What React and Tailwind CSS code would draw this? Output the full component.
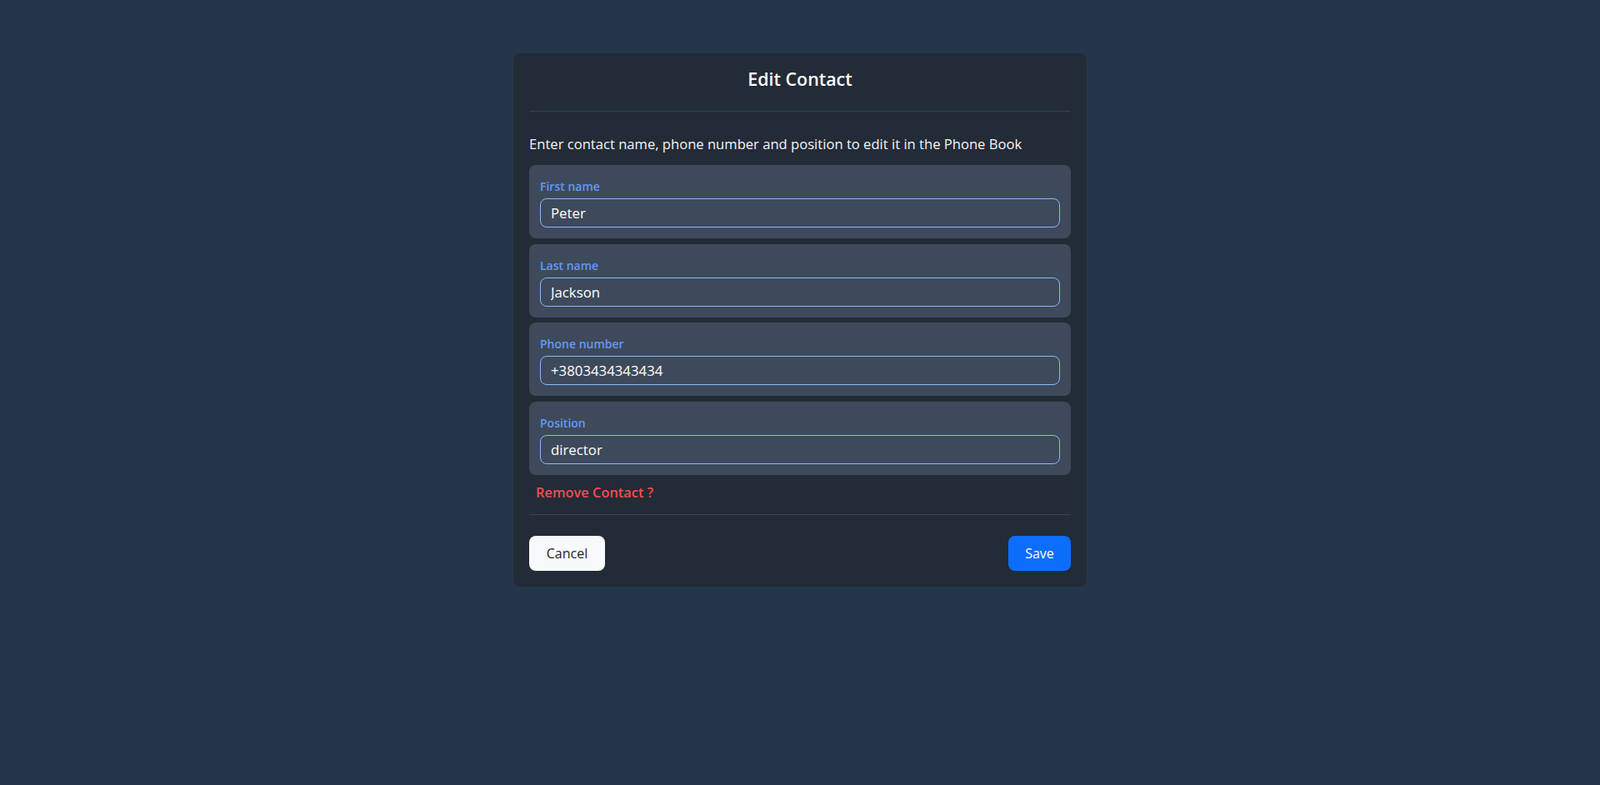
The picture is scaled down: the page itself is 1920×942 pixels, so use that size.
import React from "react";

const fields = [
  { label: "First name", value: "Peter" },
  { label: "Last name", value: "Jackson" },
  { label: "Phone number", value: "+3803434343434" },
  { label: "Position", value: "director" },
];

export default function App() {
  return (
    <div
      className="min-h-screen bg-[#253549] flex justify-center pt-[64px]"
      style={{ fontFamily: '"Open Sans", "Noto Sans", sans-serif' }}
    >
      <div className="w-[688px] self-start rounded-lg bg-[#232b36] px-[19px]">
        <div className="pt-[16px] pb-[23px] border-b border-[#30425c] text-center text-[21.4px] leading-[30px] font-semibold text-white">
          Edit Contact
        </div>
        <p className="mt-[27px] text-[16.6px] leading-6 text-[#f3f5f8]">
          Enter contact name, phone number and position to edit it in the Phone Book
        </p>
        <div className="mt-[13px] flex flex-col gap-[6.5px]">
          {fields.map((f) => (
            <div key={f.label} className="rounded-lg bg-[#3e4a5b] px-[13px] pt-[15px] pb-[13px]">
              <div className="text-[14px] leading-[21px] font-semibold text-[#6499f3]">{f.label}</div>
              <input
                defaultValue={f.value}
                className="mt-[4px] block w-full h-[35px] rounded-lg border border-[#8ab8fb] bg-transparent px-[12px] text-[16.8px] text-white outline-none"
                style={{ fontFamily: '"Open Sans", "Noto Sans", sans-serif' }}
              />
            </div>
          ))}
        </div>
        <div className="mt-[9px] pl-[8px] text-[16.4px] leading-6 font-semibold text-[#ef4f4f]">
          Remove Contact ?
        </div>
        <div className="mt-[14px] border-t border-[#34445c]" />
        <div className="flex justify-between pt-[25px] pb-[19px]">
          <button className="h-[42px] w-[91px] rounded-lg bg-[#f8f9fa] text-[16px] text-[#212529]">
            Cancel
          </button>
          <button className="h-[42px] w-[75px] rounded-lg bg-[#0d6efd] text-[16px] text-white">
            Save
          </button>
        </div>
      </div>
    </div>
  );
}
